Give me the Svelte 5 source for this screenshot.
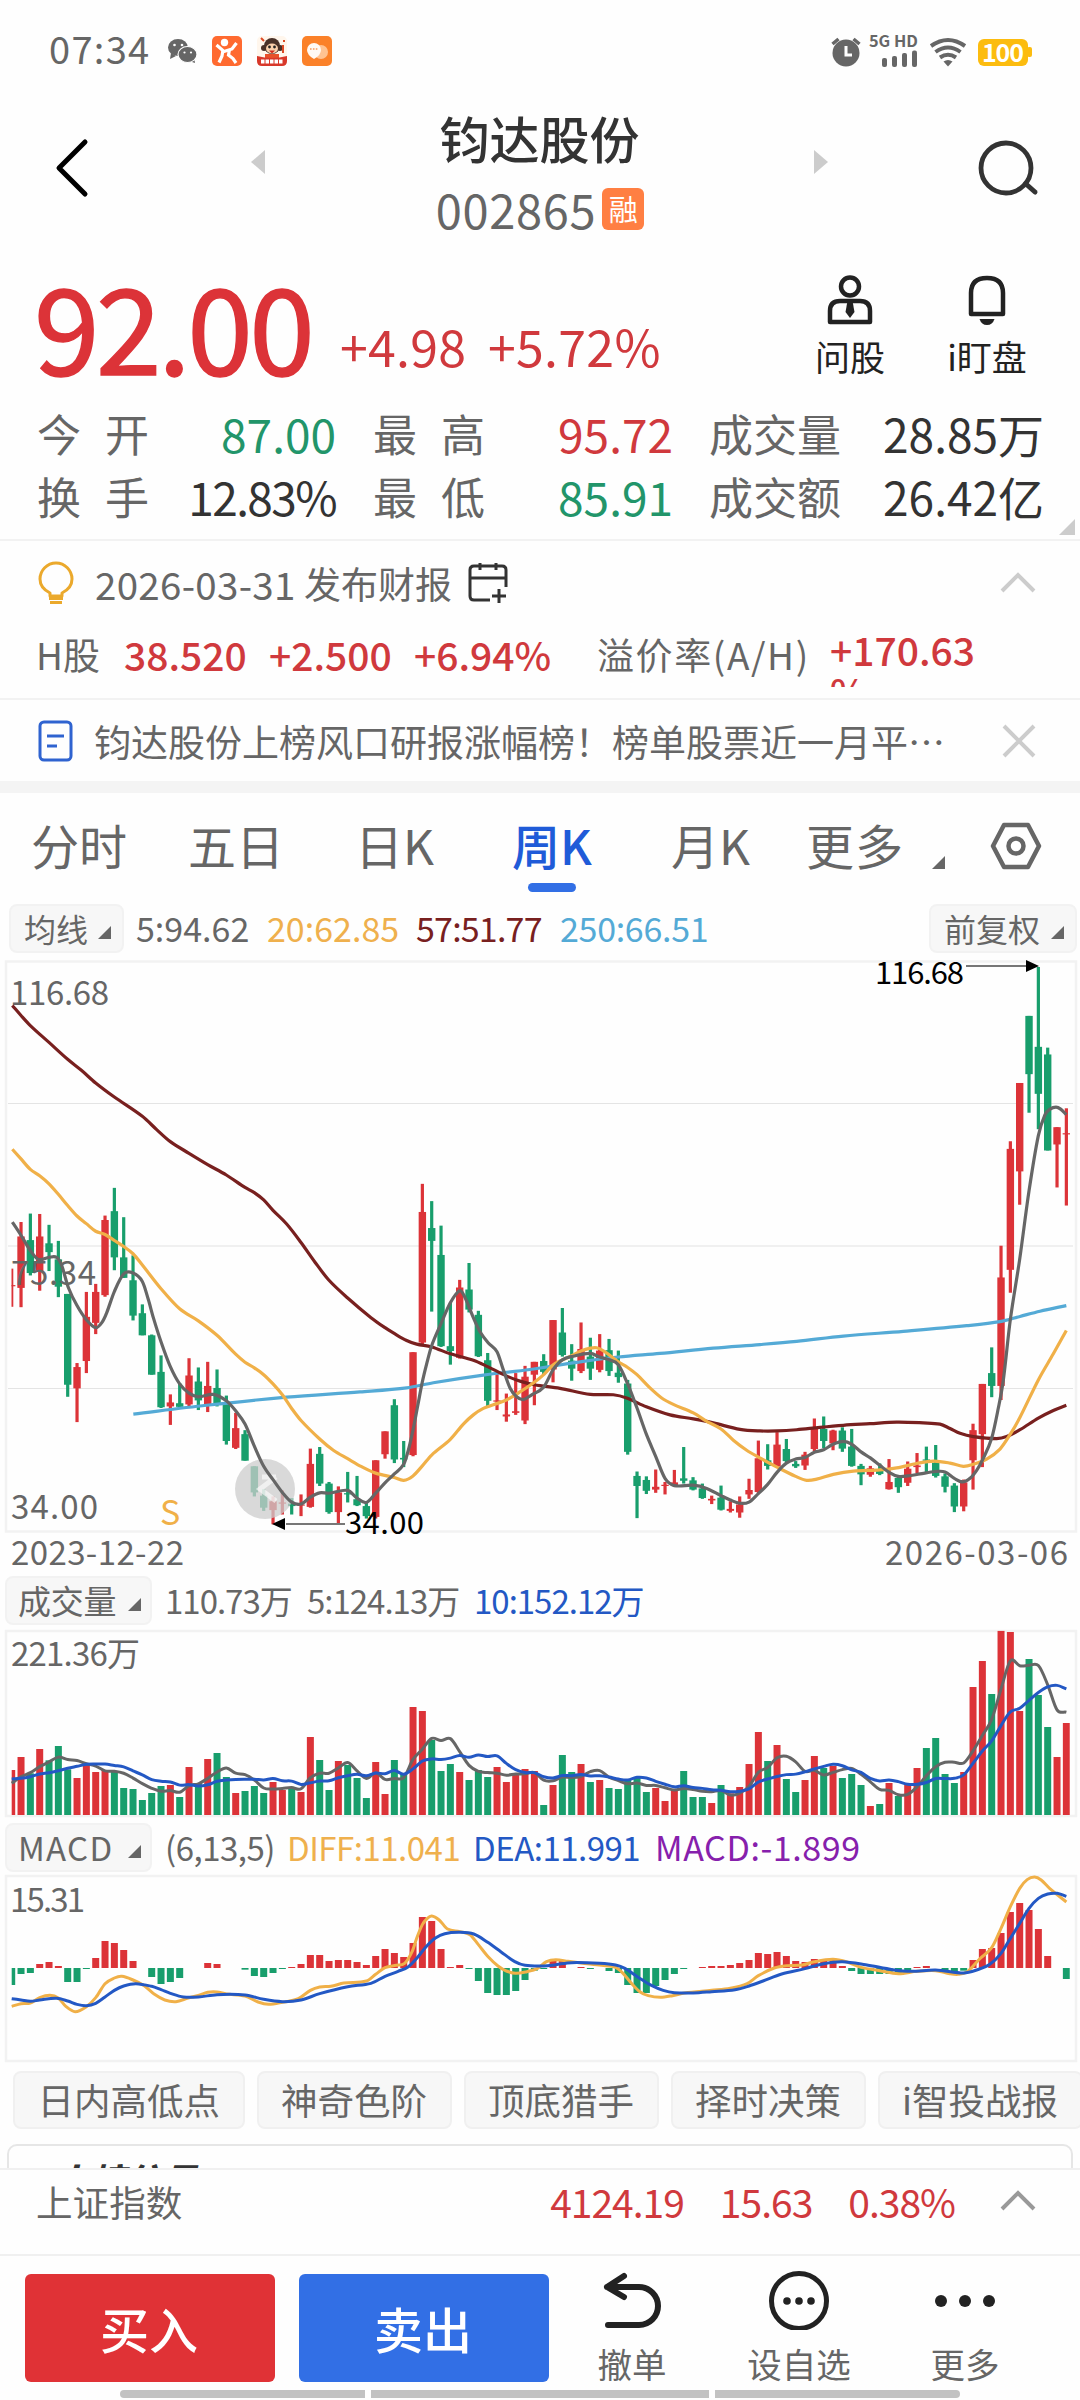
<script>
  const RED = '#dc3338'
  const GREEN = '#189e6c'
  const GRAY = '#666'
  const YELLOW = '#f0b048'
  const BLUE = '#2358c4'

  const step = 9.3333
  const cx = i => 11.7 + step * i

  // candles: direction, high, body top, body bottom, low
  const candles = `r 793 834 837 888|r 677 713 841 889|g 656 722 804 810|r 657 713 800 848|g 684 730 752 799|g 724 770 838 864
g 856 856 1082 1112|r 1028 1038 1091 1175|r 851 913 1023 1053|r 831 851 928 956|r 661 672 859 863|g 592 650 765 797
g 665 765 816 816|g 760 822 910 922|g 882 904 959 959|g 957 959 1057 1057|g 1009 1050 1138 1140|r 1106 1126 1136 1182
g 1078 1128 1137 1140|r 1016 1059 1131 1135|g 1039 1074 1121 1145|r 1025 1085 1130 1150|g 1044 1090 1130 1136|g 1109 1130 1222 1231
r 1152 1190 1239 1242|g 1195 1205 1271 1271|g 1285 1285 1350 1360|g 1342 1358 1388 1396|r 1360 1372 1394 1430|r 1345 1375 1378 1405
g 1364 1378 1384 1405|r 1355 1380 1383 1409|r 1241 1279 1386 1388|g 1237 1254 1328 1334|g 1324 1328 1399 1403|r 1335 1350 1399 1430
g 1299 1352 1355 1375|g 1309 1367 1382 1384|g 1372 1384 1409 1415|r 1270 1270 1411 1415|r 1198 1198 1255 1266|g 1118 1133 1268 1277
g 1222 1264 1268 1287|r 1001 1001 1257 1260|r 582 652 977 985|g 625 692 724 900|g 686 759 986 988|g 878 986 998 1032
r 821 840 1015 1017|g 779 845 895 902|g 898 908 1011 1013|g 1003 1021 1122 1135|r 1050 1121 1124 1145|r 1104 1156 1161 1174
r 1053 1148 1152 1157|r 1035 1062 1171 1180|r 1025 1025 1057 1133|g 1006 1023 1050 1058|r 921 921 1044 1076|g 891 952 1008 1012
g 981 1022 1042 1072|r 927 993 1048 1053|g 965 1012 1042 1070|r 956 997 1045 1051|g 968 996 1048 1060|g 997 1052 1063 1077
g 1070 1079 1249 1256|g 1298 1309 1334 1414|g 1310 1319 1346 1354|r 1293 1336 1343 1351|r 1324 1331 1334 1355|r 1294 1325 1332 1336
g 1237 1315 1321 1328|g 1312 1320 1343 1345|g 1328 1340 1364 1366|r 1358 1366 1370 1379|g 1333 1363 1393 1395|r 1372 1391 1396 1400
r 1360 1380 1400 1413|r 1316 1344 1355 1366|r 1221 1265 1349 1353|g 1230 1270 1284 1293|r 1200 1231 1286 1288|g 1217 1242 1272 1275
g 1272 1279 1285 1289|r 1249 1256 1283 1294|r 1166 1190 1242 1247|g 1161 1192 1222 1240|r 1194 1196 1228 1245|g 1188 1196 1241 1249
g 1192 1236 1284 1286|g 1279 1284 1305 1332|r 1284 1290 1306 1311|g 1278 1294 1304 1307|r 1267 1324 1342 1343|g 1308 1314 1337 1351
r 1273 1291 1326 1334|r 1252 1283 1287 1302|g 1236 1268 1271 1303|g 1232 1276 1309 1313|g 1303 1310 1336 1350|g 1327 1333 1385 1399
r 1318 1325 1385 1397|r 1179 1195 1270 1343|r 1080 1080 1205 1287|g 989 1053 1085 1113|r 736 815 1085 1120|r 476 495 796 853
r 331 331 551 634|g 164 164 309 405|g 42 241 358 446|g 243 260 499 499|r 441 441 484 591|r 394 456 459 636`
    .split(/[|\n]/)
    .map(row => {
      const [dir, ...v] = row.split(' ')
      const [high, top, bottom, low] = v.map(n => n * 0.40179 - 6)
      return { color: dir === 'r' ? RED : GREEN, high, top, bottom, low }
    })

  const nums = s => s.split(' ').map(Number)

  const volumes = nums(`600 561 610 537 571 528 598 624 585 606 600 604 654 657 690 669 648 645 681 591 642 567 549 621 669 663 648 669 636 660 651 666 501 570 660 573 585 624 684 576 672 570 612 411 423 510 603 582 606 630 600 621 591 636 612 597 603 705 645 555 606 582 636 630 654 657 630 624 666 654 693 662 603 681 681 699 645 670 651 582 486 573 525 627 666 630 558 594 588 624 612 645 708 702 639 678 640 594 534 504 612 639 606 351 273 372 182 186 423 267 375 471 561 459`)
    .map(n => n / 3 - 56)

  const macd = nums(`1245 1212 1209 1182 1176 1188 1236 1236 1197 1164 1113 1119 1140 1173 0 1221 1242 1236 1224 0 0 1179 1182 0 0 1199 1218 1221 1209 1197 1191 1182 1155 1155 1173 1170 1170 1176 1185 1158 1137 1149 1161 1119 1041 1053 1137 1191 1185 1197 1233 1269 1275 1275 1263 1230 1202 1197 1170 1172 0 1191 1197 0 1203 1209 1245 1269 1269 1248 1230 1212 1197 0 1191 1188 1188 1185 1179 1170 1149 1152 1146 1158 1173 1176 1167 1170 1170 1188 1203 1212 1212 1212 1212 1212 1203 1191 1188 0 1203 1209 1202 1170 1137 1134 1089 1026 999 1020 1077 1158 0 1227`)
    .map(n => (n ? (n - 1194) / 3 : 0))

  // average of the last n bars, the first values come from weeks off screen
  function average(list, n, head) {
    return list.map((_, i) => {
      if (i < n - 1) return [cx(i), head[i] / 3 - 56]
      return [cx(i), list.slice(i - n + 1, i + 1).reduce((a, b) => a + b, 0) / n]
    })
  }

  const vol5 = average(volumes, 5, [640, 620, 608, 590])
  const vol10 = average(volumes, 10, [627, 625, 620, 612, 608, 602, 595, 589, 583])

  // smooth curve through all the points
  function curve(p) {
    let d = `M${p[0][0]} ${p[0][1]}`
    for (let i = 0; i < p.length - 1; i++) {
      const a = p[i - 1] || p[i]
      const b = p[i]
      const c = p[i + 1]
      const e = p[i + 2] || c
      const k = (c[0] - b[0]) / 3
      const m1 = (c[1] - a[1]) / (c[0] - a[0])
      const m2 = (e[1] - b[1]) / (e[0] - b[0])
      d += `C${b[0] + k} ${b[1] + k * m1} ${c[0] - k} ${c[1] - k * m2} ${c[0]} ${c[1]}`
    }
    return d
  }

  const pairs = (s, fx, fy) => curve(s.split(' ').map(t => {
    const [x, y] = t.split(',').map(Number)
    return [fx(x), fy(y)]
  }))
  const line = s => pairs(s, x => x / 3, y => y * 0.40179 - 6)
  const osc = s => pairs(s, cx, y => y / 3 - 302)

  const ma5 = line('37,677 63,710 91,748 115,770 147,765 170,765 185,785 205,840 231,885 259,920 287,940 305,928 320,903 343,850 371,806 399,804 427,825 445,870 460,915 483,975 511,1037 539,1080 567,1103 595,1112 640,1106 679,1122 707,1147 735,1180 763,1235 791,1285 819,1318 847,1350 875,1374 903,1379 931,1362 959,1351 987,1352 1043,1345 1071,1364 1099,1375 1127,1352 1155,1326 1183,1304 1211,1280 1225,1245 1239,1195 1253,1135 1267,1075 1280,1030 1295,985 1323,930 1351,878 1379,848 1395,865 1420,915 1440,950 1465,978 1491,1000 1510,1045 1530,1090 1550,1112 1570,1119 1595,1107 1631,1088 1659,1045 1687,1020 1720,1011 1771,1004 1799,1013 1827,1020 1855,1032 1883,1080 1911,1140 1939,1205 1967,1260 1995,1315 2023,1333 2079,1332 2120,1340 2163,1358 2191,1369 2219,1377 2247,1374 2275,1353 2303,1330 2331,1300 2359,1277 2387,1267 2415,1263 2443,1250 2471,1244 2499,1230 2531,1223 2555,1230 2583,1249 2611,1264 2639,1282 2667,1300 2695,1310 2723,1309 2760,1304 2807,1298 2835,1299 2863,1315 2888,1324 2910,1315 2930,1295 2947,1270 2975,1215 2995,1140 3010,1070 3031,920 3059,770 3087,600 3115,462 3135,410 3150,396 3168,391 3182,396 3199,410')
  const ma20 = line('37,496 63,520 91,546 119,562 147,582 175,608 203,636 231,662 259,681 287,700 315,708 343,723 371,738 399,756 427,784 483,843 539,893 595,923 651,959 707,1006 735,1026 763,1040 791,1057 819,1080 847,1107 875,1141 903,1171 959,1217 1000,1245 1043,1266 1085,1286 1127,1302 1183,1313 1211,1320 1239,1309 1267,1284 1295,1257 1351,1218 1390,1180 1420,1157 1450,1141 1480,1132 1519,1120 1560,1100 1603,1076 1631,1057 1659,1033 1687,1020 1715,1010 1743,998 1771,991 1790,990 1815,1000 1855,1025 1883,1039 1911,1057 1950,1090 1985,1115 2020,1131 2080,1152 2120,1173 2163,1192 2200,1220 2240,1245 2275,1262 2331,1287 2387,1310 2420,1320 2450,1317 2500,1305 2560,1297 2640,1294 2690,1289 2750,1278 2800,1272 2850,1277 2890,1285 2920,1280 2960,1267 3000,1242 3031,1205 3060,1163 3115,1070 3160,1005 3199,947')
  const ma57 = line('37,138 63,163 91,188 147,230 203,272 245,300 287,331 343,366 427,414 470,447 511,477 567,506 623,534 679,560 735,591 763,604 791,622 819,648 860,682 903,728 945,777 987,822 1043,866 1113,915 1155,940 1180,953 1220,972 1250,981 1295,988 1351,1005 1420,1021 1463,1037 1519,1060 1560,1073 1603,1082 1680,1091 1771,1106 1840,1107 1880,1115 1939,1137 2010,1157 2080,1167 2140,1177 2220,1193 2280,1197 2331,1197 2390,1194 2460,1188 2530,1183 2610,1179 2690,1175 2770,1177 2820,1180 2850,1191 2880,1203 2920,1211 2990,1216 3020,1211 3060,1194 3115,1165 3160,1146 3199,1133')
  const ma250 = line('400,1155 620,1133 860,1113 1080,1100 1220,1090 1300,1077 1450,1058 1590,1044 1750,1024 1855,1013 1980,1004 2140,991 2280,982 2390,974 2530,961 2710,949 2900,935 3000,925 3060,912 3120,899 3199,885')

  const diff = osc('0,1309 1,1301 2,1299 3,1283 4.1,1276 5,1284 5.8,1309 6.8,1325 8,1310 9,1283 10,1241 11,1224 11.8,1219 13,1230 14.2,1247 15.3,1273 16.4,1290 17.6,1295 18.9,1284 20,1276 21,1267 22,1266 23,1272 25,1278 26.4,1296 27.5,1303 29,1297 30.7,1286 32,1261 33,1251 34.2,1249 35.6,1239 38,1233 39,1213 40,1193 41.2,1186 42.1,1180 42.9,1145 43.4,1104 44,1064 44.5,1046 45,1038 45.8,1050 46.7,1077 48,1085 49.1,1094 50,1124 51.1,1162 52.1,1188 53,1203 54,1210 55.2,1205 56.3,1196 57.3,1175 58.3,1169 59.6,1174 61,1179 63.2,1186 64.7,1192 65.5,1210 66.4,1240 67.3,1265 68.2,1277 69.5,1282 70.8,1277 72.1,1269 75,1261 77,1255 78.8,1241 80,1217 81.7,1194 83,1187 84.7,1185 86,1175 88,1168 89.5,1176 91,1192 93,1202 95,1211 97,1204 99,1202 100.5,1211 101.4,1213 102.4,1205 103.7,1167 105,1133 106,1075 107,1010 108,955 108.8,929 109.6,921 110.3,930 111.2,955 113,996')
  const dea = osc('0,1286 1,1290 2,1294 3,1290 4.8,1285 6,1293 7,1303 8,1307 9,1300 10,1281 11,1261 12,1248 13.3,1241 15,1249 16,1259 17,1270 18.4,1281 20,1281 22,1274 25,1275 27,1288 29,1295 31,1290 33,1271 36,1250 38.5,1240 40,1219 41.4,1204 42.5,1190 43.4,1165 44.4,1130 45.4,1104 46.4,1091 48,1087 49.5,1092 51,1117 52.4,1145 53.9,1175 55,1186 57,1188 58.3,1184 60,1178 63,1180 64.7,1185 65.7,1195 67.2,1223 68.6,1247 69.8,1261 71,1268 73,1269 75,1265 77.5,1259 79,1248 80.5,1233 82.5,1212 85,1196 87,1181 89,1175 91.5,1184 94.4,1199 96.4,1204 99,1200 102,1209 103.4,1200 104.8,1183 106,1150 107,1105 108,1060 109,1015 110,985 111,972 112,970 113,979')

  const stats = [
    ['今开', '87.00', 'green'], ['最高', '95.72', 'red'], ['成交量', '28.85万', ''],
    ['换手', '12.83%', 'tight'], ['最低', '85.91', 'green'], ['成交额', '26.42亿', '']
  ]
  const tabs = ['分时', '五日', '日K', '周K', '月K', '更多']
  const chips = ['日内高低点', '神奇色阶', '顶底猎手', '择时决策', 'i智投战报']
</script>

{#snippet corner()}
  <svg class="corner" width="13" height="13"><path d="M13 0v13H0z" fill={GRAY} /></svg>
{/snippet}

<div class="screen">
  <div class="status">
    <span class="time">07:34</span>
    <svg width="166" height="32" viewBox="166 35 166 32">
      <g fill="#666">
        <ellipse cx="177" cy="47.500" rx="10" ry="8.500" />
        <path d="M170 53l-1 6 6-3zM193 57l1 6-6-2z" />
        <ellipse cx="186.500" cy="54.500" rx="9.500" ry="8" stroke="#fff" stroke-width="1.200" />
      </g>
      <g fill="#fff">
        <circle cx="173.500" cy="45" r="1.300" /><circle cx="181" cy="45" r="1.300" />
        <circle cx="183.500" cy="52.500" r="1.100" /><circle cx="190" cy="52.500" r="1.100" />
      </g>
      <rect x="211" y="36" width="30" height="30" rx="5" fill="#ff6a30" />
      <circle cx="223.500" cy="42.500" r="3.700" fill="#fff" />
      <path d="M215.500 45l7.500 6.500 8-2.500 4.500-6" fill="none" stroke="#fff" stroke-width="3.200" />
      <path d="M222 50l-1 6-3 6.500M228.500 49.500l-1 5.500 4.500 3.500 3 4.500" fill="none" stroke="#fff" stroke-width="3.200" />
      <rect x="256" y="36" width="30" height="30" rx="5" fill="#fff6ec" />
      <circle cx="271" cy="46" r="8" fill="#493128" /><circle cx="263" cy="48" r="3" fill="#493128" /><circle cx="279" cy="48" r="3" fill="#493128" />
      <ellipse cx="271" cy="48.500" rx="6" ry="5" fill="#f9cfab" />
      <circle cx="268.500" cy="47" r="1.400" fill="#222" /><circle cx="273.500" cy="47" r="1.400" fill="#222" />
      <path d="M268 50.500h6l-3 3z" fill="#d3281d" /><path d="M264 54h14v4h-14z" fill="#e8502a" />
      <path d="M282 45v8M260 38l3 3M283 40v2" stroke="#dc4a25" stroke-width="2" />
      <path d="M256 56q15 4 30 0v5q0 5-5 5h-20q-5 0-5-5z" fill="#d8382a" />
      <path d="M260 61.500h22" stroke="#fff" stroke-width="4" stroke-dasharray="3.500 1" />
      <rect x="301" y="36" width="30" height="30" rx="5" fill="#fb8129" />
      <circle cx="320" cy="52" r="7" fill="#ffc392" />
      <path d="M313 59q-7-4-7-9a7 7 0 0 1 14 0q0 5-7 9z" fill="#fffaf4" />
      <path d="M309 49h8" stroke="#f79a5c" stroke-width="1.600" stroke-dasharray="1.600 1.300" />
    </svg>
    <svg class="right" width="204" height="36" viewBox="830 33 204 36">
      <g fill="#666">
        <circle cx="846" cy="53" r="13.500" />
        <path d="M832.500 44l6-5M859.500 44l-6-5" stroke="#666" stroke-width="3.500" />
        <rect x="882" y="58" width="5" height="9" rx="2" /><rect x="892" y="56" width="5" height="11" rx="2" />
        <rect x="902" y="53" width="5" height="14" rx="2" /><rect x="912" y="50.500" width="5" height="16.500" rx="2" />
        <path d="M943.500 61.500q4.500-3 9 0l-4.500 5z" />
        <text x="869" y="46.500" font-size="16" font-weight="700" textLength="49" lengthAdjust="spacingAndGlyphs">5G HD</text>
      </g>
      <path d="M846 46v9h6" stroke="#fff" stroke-width="3" fill="none" />
      <g fill="none" stroke="#666" stroke-width="4">
        <path d="M931 46q17-12 34 0M935.500 52q12.500-9 25 0M940 57.500q8-5.500 16 0" />
      </g>
      <rect x="978" y="39" width="50" height="27" rx="6" fill="#fcbc0f" />
      <rect x="1027" y="47" width="5" height="10" rx="2" fill="#fcbc0f" />
      <text x="982" y="61.500" font-size="25" font-weight="700" fill="#fff" textLength="42">100</text>
    </svg>
  </div>

  <header>
    <svg class="back" width="40" height="64"><path d="M33 6L7 32l26 26" fill="none" stroke="#000" stroke-width="5" stroke-linecap="round" stroke-linejoin="round" /></svg>
    <svg width="14" height="26"><path d="M14 1v24L0 13z" fill="#ccc" /></svg>
    <div class="name">
      <h1>钧达股份</h1>
      <div class="code">002865<span class="badge">融</span></div>
    </div>
    <svg width="14" height="26"><path d="M0 1v24l14-12z" fill="#ccc" /></svg>
    <svg class="search" width="66" height="60"><circle cx="30" cy="28" r="25" fill="none" stroke="#333" stroke-width="4.800" /><path d="M50 44l9 8" stroke="#333" stroke-width="5" stroke-linecap="round" /></svg>
  </header>

  <section class="quote red">
    <span class="price">92.00</span>
    <span class="change">+4.98</span>
    <span class="change">+5.72%</span>
    <div class="tool ask">
      <svg width="50" height="52" viewBox="0 0 50 52" fill="none" stroke="#222" stroke-width="4.500">
        <circle cx="25" cy="12.500" r="9" />
        <path d="M5 48V37q0-10 10-10h20q10 0 10 10v11z" stroke-linejoin="round" />
        <path d="M22.500 27h5l2 11-4.500 6-4.500-6z" fill="#222" stroke="none" />
      </svg>
      问股
    </div>
    <div class="tool">
      <svg width="50" height="52" viewBox="0 0 50 52" fill="none" stroke="#222" stroke-width="4.500">
        <path d="M9 40V19q0-15 16-15t16 15v21z" stroke-linejoin="round" />
        <path d="M17.500 45h15q-2 6-7.500 6t-7.500-6z" fill="#222" stroke="none" />
      </svg>
      i盯盘
    </div>
  </section>

  <section class="stats">
    {#each stats as [label, value, tone]}
      <span class="label">{#each label as ch}<i>{ch}</i>{/each}</span>
      <span class="value {tone}">{value}</span>
    {/each}
    <svg class="fold" width="16" height="16"><path d="M16 0v16H0z" fill="#ccc" /></svg>
  </section>

  <section class="notice">
    <div class="report">
      <svg width="36" height="44" viewBox="0 0 36 44" fill="none" stroke="#eba92c" stroke-width="3">
        <path d="M12 35v-3Q2 27 2 18a16 16 0 0 1 32 0q0 9-10 14v3z" stroke-linejoin="round" />
        <path d="M11 37.500h14M12 41.500h12" />
      </svg>
      <span class="date">2026-03-31</span>
      <span>发布财报</span>
      <svg class="calendar" width="42" height="42" viewBox="0 0 42 42" fill="none" stroke="#333" stroke-width="3">
        <path d="M22 38H6q-4 0-4-4V8q0-4 4-4h28q4 0 4 4v17M2 16h36M12 1v7M28 1v7M31 27v14M24 34h14" />
      </svg>
      <svg class="end" width="36" height="22"><path d="M2 19L18 3l16 16" fill="none" stroke="#ccc" stroke-width="4" /></svg>
    </div>
    <div class="hshare">
      <span>H股</span>
      <b>38.520</b>
      <b>+2.500</b>
      <b>+6.94%</b>
      <span class="premium">溢价率(A/H)</span>
      <b class="clip">+170.63 %</b>
    </div>
  </section>

  <section class="news">
    <svg width="36" height="42" viewBox="0 0 36 42" fill="none" stroke="#2f63d0" stroke-width="3">
      <rect x="2" y="2" width="31" height="38" rx="4" /><path d="M9 16h17M9 26h10" />
    </svg>
    <span>钧达股份上榜风口研报涨幅榜！榜单股票近一月平⋯</span>
    <svg class="end" width="34" height="34"><path d="M2 2l30 30M32 2L2 32" stroke="#ccc" stroke-width="4" /></svg>
  </section>

  <div class="band"></div>

  <nav>
    {#each tabs as tab}
      <span class:active={tab === '周K'}>{tab}</span>
    {/each}
    {@render corner()}
    <svg class="gear" width="54" height="50" viewBox="0 0 54 50" fill="none" stroke="#666" stroke-width="4.500" stroke-linejoin="round">
      <path d="M15 4h24l11 21-11 21H15L4 25z" /><circle cx="27" cy="25" r="7.500" />
    </svg>
  </nav>

  <div class="legend ma">
    <span class="pick">均线{@render corner()}</span>
    <span class="w1">5:94.62</span>
    <span class="w2 yellow">20:62.85</span>
    <span class="w3 dark">57:51.77</span>
    <span class="sky">250:66.51</span>
    <span class="pick adjust">前复权{@render corner()}</span>
  </div>

  <svg class="chart" width="1080" height="616" font-size="33" fill={GRAY}>
    <rect x="6" y="5.500" width="1070" height="570" fill="none" stroke="#f2f2f2" stroke-width="2.500" />
    <path d="M8 147.500h1065M8 432.500h1065" stroke="#e4e4e4" />
    <path d="M8 290h1065" stroke="#f0f0f0" stroke-width="2" />
    <g clip-path="inset(0 0 0 3.500px)">
      {#each candles as c, i}
        <rect x={cx(i) - 1.6} y={c.high} width="3.200" height={c.low - c.high} fill={c.color} />
        <rect x={cx(i) - 3.7} y={c.top} width="7.400" height={Math.max(1, c.bottom - c.top)} fill={c.color} />
      {/each}
    </g>
    <circle cx="265" cy="533" r="30" fill="#ccc" opacity=".75" />
    <path d="M276 521l-16 12 16 12M276 521h-14" fill="none" stroke="#fff" stroke-width="5" opacity=".6" />
    <text x="10" y="48.500" textLength="99">116.68</text>
    <text x="11" y="328.500" textLength="85">75.34</text>
    <text x="11" y="562.500" textLength="87">34.00</text>
    <g fill="none" stroke-width="3.200">
      <path d={ma250} stroke="#54aad6" />
      <path d={ma57} stroke="#78201f" />
      <path d={ma20} stroke={YELLOW} />
      <path d={ma5} stroke={GRAY} />
    </g>
    <text x="160" y="569" font-size="34" fill={YELLOW}>S</text>
    <g fill="#000" font-size="31">
      <path d="M966 10h62M286 568h59" stroke="#777" stroke-width="2" />
      <path d="M1026 4v12l13-6zM285 562v12l-13-6z" />
      <text x="875" y="28" textLength="89">116.68</text>
      <text x="345" y="578" textLength="79">34.00</text>
    </g>
    <text x="11" y="609" textLength="173">2023-12-22</text>
    <text x="885" y="609" textLength="183">2026-03-06</text>
  </svg>

  <div class="legend vol">
    <span class="pick">成交量{@render corner()}</span>
    <span class="w1">110.73万</span>
    <span class="w2">5:124.13万</span>
    <span class="blue">10:152.12万</span>
  </div>

  <svg class="chart" width="1080" height="194" font-size="33" fill={GRAY}>
    <rect x="6" y="5" width="1070" height="185" fill="none" stroke="#f2f2f2" stroke-width="2.500" />
    <text x="11" y="40" textLength="129">221.36万</text>
    <g clip-path="inset(0 0 0 3.500px)">
      {#each volumes as top, i}
        <rect x={cx(i) - 3.5} y={top} width="7" height={189 - top} fill={candles[i].color} />
      {/each}
    </g>
    <path d={curve(vol5)} fill="none" stroke={GRAY} stroke-width="3" />
    <path d={curve(vol10)} fill="none" stroke={BLUE} stroke-width="3" />
  </svg>

  <div class="legend osc">
    <span class="pick">MACD{@render corner()}</span>
    <span class="w1">(6,13,5)</span>
    <span class="w2 yellow">DIFF:11.041</span>
    <span class="w3 blue">DEA:11.991</span>
    <span class="purple">MACD:-1.899</span>
  </div>

  <svg class="chart" width="1080" height="192" font-size="33" fill={GRAY}>
    <rect x="6" y="4" width="1070" height="185" fill="none" stroke="#f2f2f2" stroke-width="2.500" />
    <text x="10" y="40" textLength="75">15.31</text>
    <g clip-path="inset(0 0 0 3.500px)">
      {#each macd as v, i}
        <rect x={cx(i) - 3.5} y={96 + Math.min(v, 0)} width="7" height={Math.abs(v)} fill={v < 0 ? RED : GREEN} />
      {/each}
    </g>
    <path d={diff} fill="none" stroke={YELLOW} stroke-width="3" />
    <path d={dea} fill="none" stroke={BLUE} stroke-width="3" />
  </svg>

  <div class="chips">
    {#each chips as chip}<span>{chip}</span>{/each}
  </div>

  <div class="peek"><div class="card">上榜信号</div></div>

  <div class="index">
    <span class="title">上证指数</span>
    <span class="num">4124.19</span>
    <span class="num">15.63</span>
    <span class="num">0.38%</span>
    <svg width="36" height="22"><path d="M2 19L18 3l16 16" fill="none" stroke="#999" stroke-width="4" /></svg>
  </div>

  <footer>
    <button class="buy">买入</button>
    <button class="sell">卖出</button>
    <div class="action undo">
      <svg width="62" height="60" viewBox="0 0 62 60" fill="none" stroke="#222" stroke-width="6" stroke-linecap="round" stroke-linejoin="round">
        <path d="M23 6L6 17l17 10M6 17h32a19 19 0 0 1 0 38H7" />
      </svg>
      撤单
    </div>
    <div class="action add">
      <svg width="62" height="60" viewBox="0 0 62 60">
        <circle cx="31" cy="31" r="27.500" fill="none" stroke="#222" stroke-width="5" />
        <circle cx="19" cy="31" r="3.800" /><circle cx="31" cy="31" r="3.800" /><circle cx="43" cy="31" r="3.800" />
      </svg>
      设自选
    </div>
    <div class="action">
      <svg width="62" height="60" viewBox="0 0 62 60">
        <circle cx="7" cy="31" r="6" /><circle cx="31" cy="31" r="6" /><circle cx="55" cy="31" r="6" />
      </svg>
      更多
    </div>
  </footer>

  <div class="home"><i></i><i class="mid"></i><i></i></div>
</div>

<style>
  :global(body) {
    background: #fefefe;
  }

  .screen {
    width: 1080px;
    height: 2400px;
    overflow: hidden;
    font-family: "Noto Sans CJK SC", "Noto Sans", sans-serif;
    color: #666;
    white-space: nowrap;
  }

  svg {
    display: block;
    flex: none;
  }

  i {
    font-style: normal;
  }

  .red { color: #d0393d; }
  .green { color: #22956a; }
  .yellow { color: #efb04d; }
  .dark { color: #78201f; }
  .sky { color: #54aad6; }
  .blue { color: #2358c4; }
  .purple { color: #8620ac; }

  .status {
    display: flex;
    align-items: center;
    height: 102px;
    padding: 0 46px 0 49px;
  }

  .time {
    width: 118px;
    font-size: 38px;
    letter-spacing: 1.300px;
    line-height: 50px;
    margin-top: -6px;
  }

  .status .right {
    margin-left: auto;
  }

  header {
    display: flex;
    box-sizing: border-box;
    height: 160px;
    padding: 2px 38px 0 52px;
  }

  header > svg {
    margin-top: 45px;
  }

  header > .back {
    margin: 32px 159px 0 0;
  }

  header > .search {
    margin: 36px 0 0 auto;
  }

  .name {
    width: 549px;
    text-align: center;
  }

  h1 {
    margin: 0;
    font-size: 50px;
    font-weight: 500;
    line-height: 67px;
    color: #333;
  }

  .code {
    display: flex;
    justify-content: center;
    align-items: center;
    height: 76px;
    font-size: 47px;
    letter-spacing: .7px;
    line-height: 60px;
  }

  .badge {
    width: 42px;
    height: 42px;
    margin: 0 -1px 0 6px;
    border-radius: 6px;
    font-size: 29px;
    line-height: 40px;
    letter-spacing: 0;
    color: #fff;
    background: #ff7f43;
  }

  .quote {
    display: flex;
    box-sizing: border-box;
    height: 130px;
    padding: 0 43px 0 34px;
  }

  .price {
    width: 306px;
    font-size: 118px;
    -webkit-text-stroke: 1.500px #dc3338;
    letter-spacing: -3.500px;
    line-height: 124px;
    color: #dc3338;
  }

  .change {
    width: 148px;
    font-size: 50px;
    letter-spacing: .3px;
    line-height: 166px;
  }

  .tool {
    display: flex;
    flex-direction: column;
    align-items: center;
    width: 100px;
    padding-top: 12px;
    font-size: 35px;
    line-height: 60px;
    color: #222;
  }

  .ask {
    margin: 0 37px 0 auto;
  }

  .stats {
    display: grid;
    grid-template-columns: 112px 187px 112px 187px 132px 202px;
    grid-template-rows: 63px 63px;
    box-sizing: border-box;
    height: 149px;
    padding: 10px 0 0 37px;
    border-bottom: 2px solid #f2f2f2;
    font-size: 44px;
    line-height: 63px;
    position: relative;
  }

  .label {
    display: flex;
    justify-content: space-between;
  }

  .value {
    text-align: right;
    font-size: 46px;
    color: #333;
  }

  .value.red { color: #d0393d; }
  .value.green { color: #22956a; }
  .value.tight { letter-spacing: -1.600px; }

  .label:nth-child(6n + 3) {
    margin-left: 37px;
    margin-right: -37px;
  }

  .value:nth-child(6n + 4) {
    margin-right: -38px;
  }

  .label:nth-child(6n + 5) {
    margin-left: 74px;
    margin-right: -74px;
  }

  .value:nth-child(6n) {
    margin-right: -75px;
  }

  .fold {
    position: absolute;
    right: 5px;
    bottom: 4px;
  }

  .notice {
    box-sizing: border-box;
    height: 159px;
    border-bottom: 2px solid #f2f2f2;
    font-size: 37px;
  }

  .report {
    display: flex;
    align-items: center;
    height: 84px;
    padding: 0 44px 0 38px;
  }

  .date {
    width: 209px;
    margin-left: 21px;
    font-size: 38.500px;
    letter-spacing: .3px;
  }

  .calendar {
    margin-left: 16px;
  }

  .end {
    margin-left: auto;
  }

  .hshare {
    display: flex;
    height: 62px;
    padding-left: 36px;
    line-height: 59px;
    overflow: hidden;
  }

  .hshare span {
    width: 88px;
  }

  .hshare b {
    width: 145px;
    font-size: 39px;
    font-weight: 500;
    color: #d0393d;
  }

  .hshare .premium {
    width: 233px;
    margin-left: 38px;
    letter-spacing: 1.600px;
  }

  .hshare .clip {
    white-space: normal;
    line-height: 42px;
    padding-top: 3px;
  }

  .news {
    display: flex;
    align-items: center;
    height: 81px;
    padding: 0 44px 0 38px;
    font-size: 37px;
  }

  .news span {
    margin-left: 20px;
  }

  .band {
    height: 12px;
    background: #f4f4f4;
  }

  nav {
    display: flex;
    height: 107px;
    padding-left: 31px;
    font-size: 48px;
    line-height: 103px;
    position: relative;
  }

  nav span:nth-child(1) { width: 157px; }
  nav span:nth-child(2) { width: 167px; }
  nav span:nth-child(3) { width: 157px; }
  nav span:nth-child(4) { width: 159px; }
  nav span:nth-child(5) { width: 135px; }
  nav span:nth-child(6) { width: 126px; letter-spacing: 1px; }

  nav .active {
    font-weight: 500;
    color: #1f5bd8;
    position: relative;
  }

  .active::after {
    content: '';
    position: absolute;
    left: 16px;
    bottom: 8px;
    width: 48px;
    height: 9px;
    border-radius: 4.500px;
    background: #326fe5;
  }

  nav .corner {
    margin-top: 63px;
  }

  .gear {
    margin: 28px 0 0 44px;
  }

  .legend {
    display: flex;
    align-items: center;
    height: 56px;
    padding-left: 9px;
    font-size: 34px;
    line-height: 48px;
  }

  .pick {
    display: flex;
    align-items: center;
    box-sizing: border-box;
    width: 115px;
    height: 49px;
    padding: 0 11px 0 13px;
    margin-right: 12px;
    border: 2px solid #f2f2f2;
    border-radius: 8px;
    font-size: 32px;
    background: #f7f7f7;
  }

  .pick .corner {
    margin: 8px 0 0 auto;
  }

  .ma .w1 { width: 131px; }
  .ma .w2 { width: 149px; }
  .ma .w3 { width: 144px; letter-spacing: -.8px; }
  .ma .sky { letter-spacing: -.3px; }

  .adjust {
    width: 148px;
    margin: 0 3px 0 auto;
  }

  .vol, .osc {
    box-sizing: border-box;
    height: 54px;
    padding: 2px 0 0 5px;
  }

  .vol .pick, .osc .pick {
    width: 147px;
    margin-right: 13px;
    padding: 0 9px 0 11px;
  }

  .vol { font-size: 33px; letter-spacing: -1px; }
  .vol .pick { font-size: 33px; letter-spacing: -.3px; }
  .vol .w1 { width: 142px; }
  .vol .w2 { width: 167px; }
  .osc { height: 52px; font-size: 33px; letter-spacing: -.5px; }
  .osc .pick { font-size: 33px; letter-spacing: 1.300px; }
  .osc .w1 { width: 122px; }
  .osc .w2 { width: 186px; }
  .osc .w3 { width: 182px; }
  .osc .purple { font-size: 34px; letter-spacing: .6px; }

  .chips {
    display: flex;
    gap: 12px;
    height: 80px;
    padding: 7px 0 0 13px;
    box-sizing: border-box;
  }

  .chips span {
    flex: none;
    box-sizing: border-box;
    height: 58px;
    padding: 0 22.500px;
    border: 2px solid #f0f0f0;
    border-radius: 8px;
    font-size: 36.500px;
    line-height: 53px;
    background: #f7f7f7;
  }

  .peek {
    height: 24px;
    padding: 0 7px;
    overflow: hidden;
  }

  .card {
    height: 80px;
    padding-left: 44px;
    border: 2px solid #e6e6e6;
    border-radius: 10px;
    font-size: 36px;
    font-weight: 900;
    font-style: italic;
    line-height: 66px;
    color: #333;
  }

  .index {
    display: flex;
    align-items: center;
    box-sizing: border-box;
    height: 88px;
    padding: 0 44px 22px 36px;
    border-top: 2px solid #f0f0f0;
    border-bottom: 2px solid #f0f0f0;
    font-size: 36.600px;
  }

  .title {
    margin-right: auto;
  }

  .num {
    margin-right: 36px;
    font-size: 39px;
    letter-spacing: -1px;
    color: #d0393d;
  }

  .index svg {
    margin: 0 0 0 9px;
  }

  footer {
    display: flex;
    height: 134px;
    padding: 18px 0 0 25px;
    box-sizing: border-box;
  }

  button {
    width: 250px;
    height: 108px;
    margin: 0 24px 0 0;
    padding: 0 2px 0 0;
    border: 0;
    border-radius: 6px;
    font: 500 49px "Noto Sans CJK SC", sans-serif;
    line-height: 100px;
    color: #fff;
  }

  .buy { background: #e03236; }
  .sell { background: #326fe5; }

  .action {
    display: flex;
    flex-direction: column;
    align-items: center;
    width: 110px;
    margin-top: -4px;
    font-size: 34.500px;
    line-height: 66px;
  }

  .action svg {
    fill: #222;
  }

  .undo { margin-left: 4px; }
  .undo svg { fill: none; }

  .add { margin: -4px 56px 0 57px; }

  .home {
    display: flex;
    gap: 6px;
    padding: 0 120px;
  }

  .home i {
    width: 245px;
    height: 8px;
    border-radius: 4px 0 0 4px;
    background: #c2c2c2;
  }

  .home .mid {
    width: 338px;
    border-radius: 0;
  }

  .home i:last-child {
    border-radius: 0 4px 4px 0;
  }
</style>
